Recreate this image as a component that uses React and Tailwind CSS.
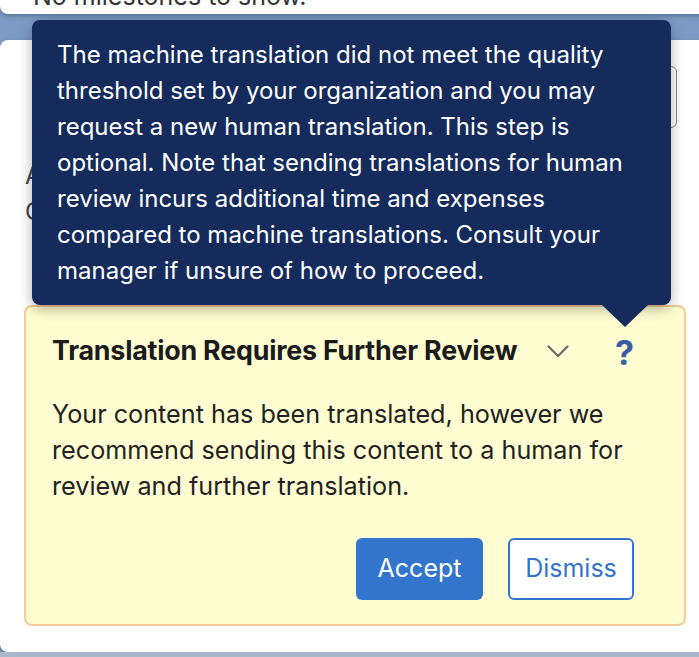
const font = { fontFamily: 'Inter, "Noto Sans", sans-serif' };

function HelpTooltip() {
  return (
    <div className="absolute left-[32px] top-[20px] z-10 w-[639px] rounded-[8px] bg-[#142b5c] pl-[25px] pr-[26px] pt-[17px] pb-[16px] shadow-[0_4px_14px_rgba(0,0,0,0.3)]">
      <p className="text-[24px] leading-[36px] text-white">
        The machine translation did not meet the quality threshold set by your
        organization and you may request a new human translation. This step is
        optional. Note that sending translations for human review incurs
        additional time and expenses compared to machine translations. Consult
        your manager if unsure of how to proceed.
      </p>
      {/* arrow */}
      <div className="absolute left-[570px] top-full h-0 w-0 border-x-[23px] border-t-[22px] border-x-transparent border-t-[#142b5c]"></div>
    </div>
  );
}

export default function App() {
  return (
    <div className="relative h-[657px] w-[699px] overflow-hidden bg-[#7d9bc4]" style={font}>
      {/* previous card, scrolled mostly out of view */}
      <div className="-mt-[22px] h-[36px] w-[720px] rounded-b-[8px] bg-white pl-[33px] shadow-[0_2px_4px_rgba(0,0,0,0.25)]">
        <p className="text-[25px] leading-[36px] text-[#333]">No milestones to show.</p>
      </div>

      <div className="mt-[26px] h-[612px] w-[720px] rounded-l-[8px] bg-white pt-[26px] shadow-[0_2px_4px_rgba(0,0,0,0.25)]">
        <div className="ml-auto mr-[43px] h-[62px] w-[400px] rounded-[6px] border border-[#888]"></div>

        <div className="mt-[30px] pl-[25px] text-[24px] leading-[36px] text-[#444]">
          <p>Automatic translation</p>
          <p>Content language</p>
        </div>

        <div className="mt-[75px] ml-[24px] w-[662px] rounded-[8px] border-2 border-[#f6cb97] bg-[#fffdd1] pl-[26px] pr-[44px] pt-[25px] pb-[24px]">
          <div className="flex h-[36px] items-center">
            <h2 className="text-[26.8px] font-bold tracking-[-0.2px] text-[#1b1b1b]">
              Translation Requires Further Review
            </h2>
            <svg className="ml-[30px] mt-[2px]" width="22" height="13" viewBox="0 0 22 13" fill="none">
              <polyline points="1.5,1.5 11,11 20.5,1.5" stroke="#6b6b6b" strokeWidth="2.2" strokeLinecap="round" strokeLinejoin="round" />
            </svg>
            <span className="ml-auto mr-[6px] mt-[6px] text-[34px] font-bold leading-none text-[#3a5ea2]">?</span>
          </div>

          <p className="mt-[28px] text-[25.2px] leading-[36px] text-[#222]">
            Your content has been translated, however we recommend sending this
            content to a human for review and further translation.
          </p>

          <div className="mt-[34px] mr-[6px] flex justify-end gap-[25px]">
            <button className="h-[62px] w-[127px] rounded-[6px] bg-[#3374cc] text-[25px] text-white">
              Accept
            </button>
            <button className="h-[62px] w-[126px] rounded-[6px] border-2 border-[#3374cc] bg-white text-[25px] text-[#3374cc]">
              Dismiss
            </button>
          </div>
        </div>
      </div>

      <div className="h-[10px] bg-[#a9b6cc]"></div>

      <HelpTooltip />
    </div>
  );
}
